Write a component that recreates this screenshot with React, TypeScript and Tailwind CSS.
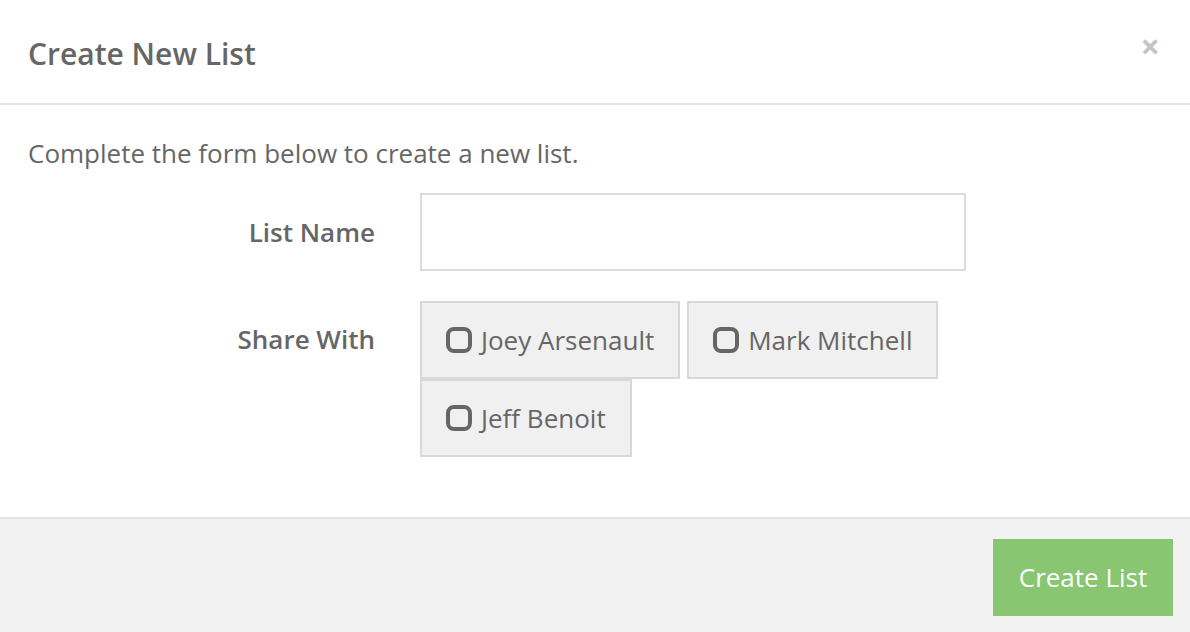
import React from "react";

const people = ["Joey Arsenault", "Mark Mitchell", "Jeff Benoit"];

function CheckIcon() {
  return (
    <svg width="26" height="26" viewBox="0 0 26 26" className="shrink-0">
      <rect x="2" y="2" width="22" height="22" rx="6" fill="none" stroke="#666666" strokeWidth="4" />
    </svg>
  );
}

export default function App() {
  return (
    <div
      className="w-[1190px] h-[632px] bg-white text-[#666666] flex flex-col overflow-hidden"
      style={{ fontFamily: '"Open Sans", "Liberation Sans", sans-serif' }}
    >
      {/* header */}
      <div className="h-[105px] flex items-center justify-between pl-7 pr-[30px] border-b-2 border-[#e5e5e5] shrink-0">
        <h2 className="text-[30px] font-semibold leading-none pt-1">Create New List</h2>
        <span className="text-[34px] font-bold text-[#c4c4c4] leading-none pb-3">×</span>
      </div>

      {/* body */}
      <div className="flex-1 px-7 pt-[30px]">
        <p className="text-[26px] leading-[36px]">Complete the form below to create a new list.</p>
        <div className="mt-[22px] grid grid-cols-[347px_1fr] gap-x-[45px] gap-y-[30px]">
          <label className="text-[26px] font-semibold text-right self-center">List Name</label>
          <div className="w-[546px] h-[78px] border-2 border-[#dddddd] bg-white" />
          <label className="text-[26px] font-semibold text-right pt-[19px]">Share With</label>
          <div className="flex flex-wrap w-[560px]">
            {people.map((p) => (
              <div
                key={p}
                className="h-[78px] mr-[7px] flex items-center gap-[9px] pl-[24px] pr-[24px] bg-[#f0f0f0] border-2 border-[#d9d9d9] text-[26px]"
              >
                <CheckIcon />
                <span>{p}</span>
              </div>
            ))}
          </div>
        </div>
      </div>

      {/* footer */}
      <div className="h-[115px] shrink-0 bg-[#f2f2f2] border-t-2 border-[#e5e5e5] flex items-start justify-end pt-[20px] pr-[17px]">
        <button className="w-[180px] h-[77px] bg-[#88c671] text-white text-[26px]">Create List</button>
      </div>
    </div>
  );
}
